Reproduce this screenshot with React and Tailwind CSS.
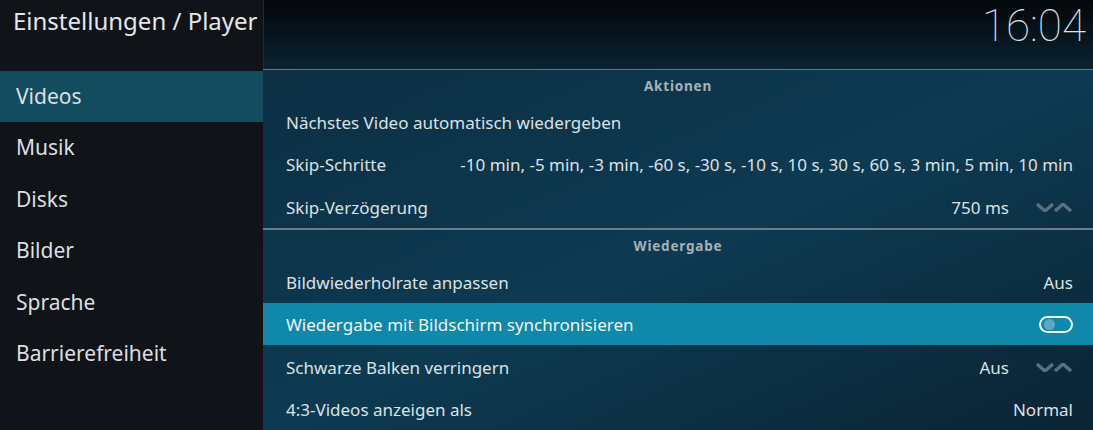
import React from 'react';

const menu = ['Videos', 'Musik', 'Disks', 'Bilder', 'Sprache', 'Barrierefreiheit'];

const Spinner = () => (
  <svg width="37" height="9" viewBox="0 0 37 9" className="ml-[27px]">
    <path d="M1 1 L9 8 L17 1" fill="none" stroke="#5a707f" strokeWidth="3.4" strokeLinejoin="miter" />
    <path d="M19 8 L27 1 L35 8" fill="none" stroke="#5a707f" strokeWidth="3.4" strokeLinejoin="miter" />
  </svg>
);

const Toggle = () => (
  <div className="w-[34px] h-[17px] rounded-full border-2 border-[#f2f4f5] flex items-center pl-[3px]">
    <div className="w-[11px] h-[11px] rounded-full bg-[#5aaac4]" />
  </div>
);

const Header = ({ children }) => (
  <div className="h-[30.5px] pt-[3px] flex items-center justify-center text-[13.5px] font-bold tracking-[0.06em] text-[#a9b2b7]">
    {children}
  </div>
);

const Row = ({ label, value, spinner, toggle, active, children }) => (
  <div
    className={
      'h-[42.5px] pt-[2px] flex items-center pl-[23px] pr-[20px] text-[17px] ' +
      (active ? 'bg-[#0f88a9] text-[#eef3f5]' : 'text-[#dce1e3]')
    }
  >
    <span className="flex-1 whitespace-nowrap">{label}</span>
    {children}
    {value && <span>{value}</span>}
    {spinner && <Spinner />}
    {toggle && <Toggle />}
  </div>
);

export default function App() {
  return (
    <div
      className="w-[1093px] h-[430px] flex overflow-hidden bg-[#101418]"
      style={{ fontFamily: '"Noto Sans", "Open Sans", sans-serif' }}
    >
      {/* Sidebar */}
      <div className="w-[263px] flex flex-col bg-[#101418]">
        <div className="h-[71px] pl-[13px] pt-[3px] text-[24px] whitespace-nowrap text-[#e4e6e8]">
          Einstellungen / Player
        </div>
        {menu.map((m, i) => (
          <div
            key={m}
            className={
              'h-[51.4px] flex items-center pl-[16px] text-[21px] text-[#dcdfe1] ' +
              (i === 0 ? 'bg-[#134c5e]' : '')
            }
          >
            {m}
          </div>
        ))}
      </div>

      {/* Main */}
      <div className="flex-1 flex flex-col bg-[#0c3147]">
        <div className="h-[70px] flex justify-end items-start pr-[7px] bg-gradient-to-b from-[#04070a] to-[#0a2331] border-l border-[#1b2d38]">
          <span
            className="text-[44px] font-thin leading-[52px] text-[#dde2e5]"
            style={{ fontFamily: 'Roboto, "Noto Sans", sans-serif' }}
          >
            16:04
          </span>
        </div>
        <div className="h-px bg-[#1a93b9]" />
        <div className="flex-1 flex flex-col bg-gradient-to-br from-[#0c2f44] via-[#0d3a52] to-[#0a2434]">
          <Header>Aktionen</Header>
          <Row label="Nächstes Video automatisch wiedergeben" />
          <Row label="Skip-Schritte">
            <span className="whitespace-nowrap">
              -10 min, -5 min, -3 min, -60 s, -30 s, -10 s, 10 s, 30 s, 60 s, 3 min, 5 min, 10 min
            </span>
          </Row>
          <Row label="Skip-Verzögerung" value="750 ms" spinner />
          <div className="h-[2px] bg-[#6c7d87]" />
          <Header>Wiedergabe</Header>
          <Row label="Bildwiederholrate anpassen" value="Aus" />
          <Row label="Wiedergabe mit Bildschirm synchronisieren" toggle active />
          <Row label="Schwarze Balken verringern" value="Aus" spinner />
          <Row label="4:3-Videos anzeigen als" value="Normal" />
        </div>
      </div>
    </div>
  );
}
